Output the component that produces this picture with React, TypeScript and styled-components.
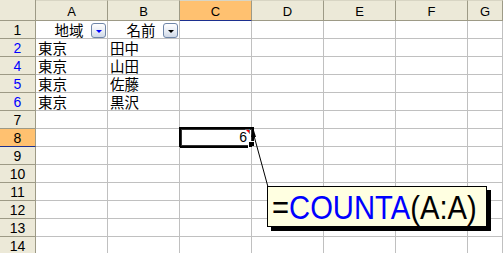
import React from "react";
import styled, { createGlobalStyle, css } from "styled-components";

const GlobalStyle = createGlobalStyle`
  html, body { margin: 0; padding: 0; background: #fff; overflow: hidden; }
  #root { width: 503px; height: 253px; }
`;

const HEADER_BORDER = "#9D9A86";
const GRID = "#C0C0C0";
const JP = `"Noto Sans CJK JP", "Noto Sans", sans-serif`;
const LATIN = `"Liberation Sans", Arial, sans-serif`;

const Sheet = styled.div`
  position: relative;
  width: 503px;
  height: 253px;
  overflow: hidden;
  display: grid;
  grid-template-columns: 36px repeat(6, 72px) 1fr;
  grid-template-rows: 21px;
  grid-auto-rows: 18px;
  background: #fff;
`;

const Corner = styled.div`
  background: #ece9d8;
  border-right: 1px solid ${HEADER_BORDER};
  border-bottom: 1px solid ${HEADER_BORDER};
  box-sizing: border-box;
`;

const ColHeader = styled.div<{ $selected?: boolean }>`
  box-sizing: border-box;
  background: ${(p) => (p.$selected ? "#ffc170" : "#ece9d8")};
  border-right: 1px solid ${HEADER_BORDER};
  border-bottom: 1px solid ${(p) => (p.$selected ? "#1c2f8f" : HEADER_BORDER)};
  border-top: 1px solid #d8d5c4;
  display: flex;
  align-items: center;
  justify-content: center;
  font-family: ${LATIN};
  font-size: 13px;
  color: #000;
  padding-top: 1px;
`;

const RowHeader = styled.div<{ $selected?: boolean; $filtered?: boolean }>`
  box-sizing: border-box;
  background: ${(p) => (p.$selected ? "#ffc170" : "#ece9d8")};
  border-right: 1px solid ${HEADER_BORDER};
  border-bottom: 1px solid ${(p) => (p.$selected ? "#1c2f8f" : HEADER_BORDER)};
  display: flex;
  align-items: center;
  justify-content: center;
  font-family: ${LATIN};
  font-size: 14px;
  color: ${(p) => (p.$filtered ? "#0000ff" : "#000")};
  padding-top: 1px;
`;

const Cell = styled.div<{ $align?: "left" | "center" | "right" }>`
  position: relative;
  box-sizing: border-box;
  border-right: 1px solid ${GRID};
  border-bottom: 1px solid ${GRID};
  display: flex;
  align-items: flex-end;
  justify-content: ${(p) =>
    p.$align === "center" ? "center" : p.$align === "right" ? "flex-end" : "flex-start"};
  padding: 0 3px 0 2px;
  font-family: ${JP};
  font-size: 14.5px;
  line-height: 17px;
  color: #000;
  white-space: nowrap;
`;

const HeaderLabel = styled.span`
  padding-right: 4px;
`;

const Value = styled.span`
  font-family: ${LATIN};
  font-size: 14px;
  padding-right: 1px;
`;

const Selection = styled.div`
  position: absolute;
  left: -1px;
  top: -2px;
  width: 75px;
  height: 21px;
  box-sizing: border-box;
  border: 2px solid #000;
  box-shadow: inset 0 0 0 1px #333;
  pointer-events: none;
`;

const FillHandle = styled.div`
  position: absolute;
  right: -3px;
  bottom: -1px;
  width: 5px;
  height: 5px;
  background: #000;
  outline: 1px solid #fff;
`;

const CommentMark = styled.svg`
  position: absolute;
  right: 1px;
  top: 0;
`;

const FilterButton = styled.div<{ $active?: boolean }>`
  position: absolute;
  right: 1px;
  top: 2px;
  width: 15px;
  height: 15px;
  box-sizing: border-box;
  border: 1px solid #6f86a8;
  border-radius: 3px;
  background: linear-gradient(#ffffff, #e6ebf3 60%, #cfd8e6);
  display: flex;
  align-items: center;
  justify-content: center;
  &::after {
    content: "";
    width: 0;
    height: 0;
    border-left: 3px solid transparent;
    border-right: 3px solid transparent;
    border-top: 3px solid ${(p) => (p.$active ? "#0000ff" : "#000")};
    margin-top: 1px;
  }
`;

const Leader = styled.svg`
  position: absolute;
  left: 0;
  top: 0;
  pointer-events: none;
`;

const Callout = styled.div`
  position: absolute;
  left: 267px;
  top: 186px;
  width: 220px;
  height: 41px;
  box-sizing: border-box;
  background: #ffffe1;
  border: 1px solid #000;
  box-shadow: 4px 4px 0 #000;
  display: flex;
  align-items: center;
  padding-left: 4px;
  overflow: hidden;
`;

const Formula = styled.span`
  font-family: ${LATIN};
  font-size: 33px;
  line-height: 1;
  color: #000;
  white-space: nowrap;
  transform: scaleX(0.885);
  transform-origin: left center;
  display: inline-block;
  padding-top: 1px;
`;

const Fn = styled.span`
  color: #0000ff;
`;

const columns = ["A", "B", "C", "D", "E", "F", "G"];
const rows = [1, 2, 4, 5, 6, 7, 8, 9, 10, 11, 12, 13, 14];
const data: Record<number, [string, string]> = {
  2: ["東京", "田中"],
  4: ["東京", "山田"],
  5: ["東京", "佐藤"],
  6: ["東京", "黒沢"],
};
const filtered = new Set([2, 4, 5, 6]);

export default function App() {
  return (
    <>
      <GlobalStyle />
      <Sheet>
        <Corner />
        {columns.map((c) => (
          <ColHeader key={c} $selected={c === "C"}>
            {c}
          </ColHeader>
        ))}
        {rows.map((r) => (
          <React.Fragment key={r}>
            <RowHeader $selected={r === 8} $filtered={filtered.has(r)}>
              {r}
            </RowHeader>
            {columns.map((c, i) => {
              if (r === 1 && (c === "A" || c === "B")) {
                return (
                  <Cell key={c} $align="center">
                    <HeaderLabel>{c === "A" ? "地域" : "名前"}</HeaderLabel>
                    <FilterButton $active={c === "A"} />
                  </Cell>
                );
              }
              if (data[r] && i < 2) {
                return <Cell key={c}>{data[r][i]}</Cell>;
              }
              if (r === 8 && c === "C") {
                return (
                  <Cell key={c} $align="right">
                    <Value>6</Value>
                    <Selection />
                    <CommentMark width="5" height="5" viewBox="0 0 5 5">
                      <polygon points="0,0 5,0 5,5" fill="#ff0000" />
                      <polyline points="0,0 5,0 5,5" fill="none" stroke="#00c8d8" strokeWidth="1" />
                    </CommentMark>
                    <FillHandle />
                  </Cell>
                );
              }
              return <Cell key={c} />;
            })}
          </React.Fragment>
        ))}
        <Leader width="503" height="253" viewBox="0 0 503 253">
          <line x1="253.5" y1="134" x2="268" y2="187" stroke="#000" strokeWidth="1" />
          <polygon points="253.5,129 251,137 256,137" fill="#000" />
        </Leader>
        <Callout>
          <Formula>
            =<Fn>COUNTA</Fn>(A:A)
          </Formula>
        </Callout>
      </Sheet>
    </>
  );
}
